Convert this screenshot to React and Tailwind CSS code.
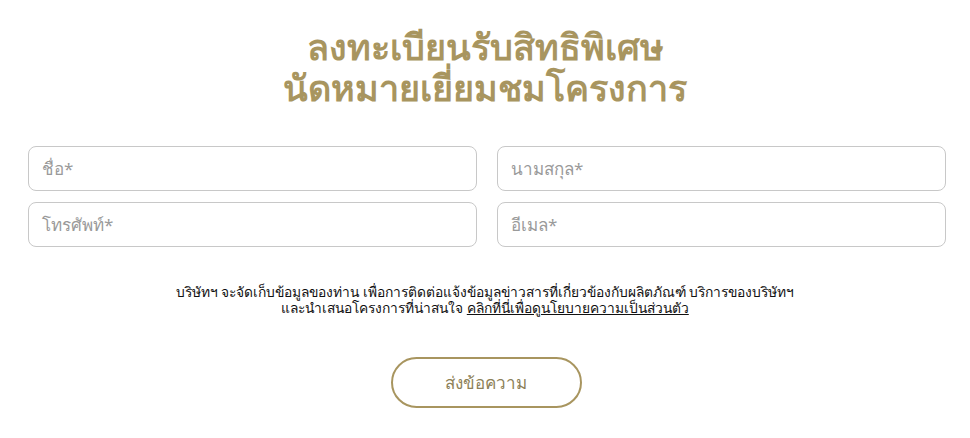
export default function App() {
  return (
    <div className="w-[970px] h-[438px] bg-white font-['Noto_Sans','Liberation_Sans',sans-serif] flex flex-col items-center">
      <h1 className="mt-[26px] text-center text-[36px] leading-[41px] font-bold text-[#a8955f]">
        ลงทะเบียนรับสิทธิพิเศษ<br />นัดหมายเยี่ยมชมโครงการ
      </h1>
      <div className="mt-[38px] self-stretch pl-[28px] pr-[24px] grid grid-cols-2 gap-x-[20px] gap-y-[11px]">
        {["ชื่อ*", "นามสกุล*", "โทรศัพท์*", "อีเมล*"].map((p) => (
          <div key={p} className="h-[45px] rounded-[8px] border border-[#c8c8c8] flex items-center px-[13px] text-[17px] text-[#9a9a9a]">
            {p}
          </div>
        ))}
      </div>
      <p className="mt-[37px] text-center text-[13.8px] leading-[16px] text-[#111]">
        บริษัทฯ จะจัดเก็บข้อมูลของท่าน เพื่อการติดต่อแจ้งข้อมูลข่าวสารที่เกี่ยวข้องกับผลิตภัณฑ์ บริการของบริษัทฯ<br />
        และนำเสนอโครงการที่น่าสนใจ <span className="underline">คลิกที่นี่เพื่อดูนโยบายความเป็นส่วนตัว</span>
      </p>
      <button className="mt-[41px] ml-[2px] w-[191px] h-[51px] rounded-full border-2 border-[#a8955f] text-[17px] text-[#8d8158] flex items-center justify-center">
        ส่งข้อความ
      </button>
    </div>
  );
}
